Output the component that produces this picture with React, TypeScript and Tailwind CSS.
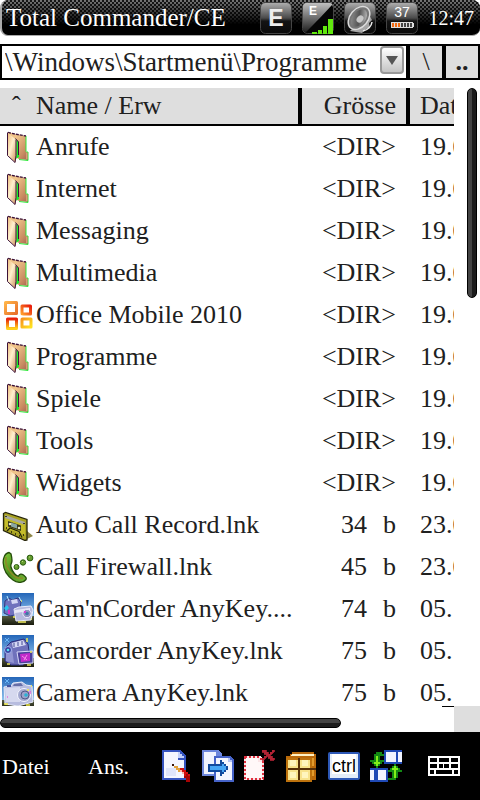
import type { ReactNode } from "react"

type IconName = "folder" | "office" | "cassette" | "phone" | "camBoth" | "camcorder" | "camera"

interface Entry {
  name: string
  icon: IconName
  size: string
  unit?: string
  date: string
}

const ENTRIES: Entry[] = [
  { name: "Anrufe", icon: "folder", size: "<DIR>", date: "19.0" },
  { name: "Internet", icon: "folder", size: "<DIR>", date: "19.0" },
  { name: "Messaging", icon: "folder", size: "<DIR>", date: "19.0" },
  { name: "Multimedia", icon: "folder", size: "<DIR>", date: "19.0" },
  { name: "Office Mobile 2010", icon: "office", size: "<DIR>", date: "19.0" },
  { name: "Programme", icon: "folder", size: "<DIR>", date: "19.0" },
  { name: "Spiele", icon: "folder", size: "<DIR>", date: "19.0" },
  { name: "Tools", icon: "folder", size: "<DIR>", date: "19.0" },
  { name: "Widgets", icon: "folder", size: "<DIR>", date: "19.0" },
  { name: "Auto Call Record.lnk", icon: "cassette", size: "34", unit: "b", date: "23.0" },
  { name: "Call Firewall.lnk", icon: "phone", size: "45", unit: "b", date: "23.0" },
  { name: "Cam'nCorder AnyKey....", icon: "camBoth", size: "74", unit: "b", date: "05." },
  { name: "Camcorder AnyKey.lnk", icon: "camcorder", size: "75", unit: "b", date: "05." },
  { name: "Camera AnyKey.lnk", icon: "camera", size: "75", unit: "b", date: "05." },
]

const Svg32 = ({ children }: { children: ReactNode }) => (
  <svg viewBox="0 0 32 32" className="size-8 shrink-0" aria-hidden="true">
    {children}
  </svg>
)

// Toolbar icons live on a 16px grid, drawn double size
const Svg16 = ({ children }: { children: ReactNode }) => (
  <svg viewBox="0 0 16 16" className="size-8 shrink-0" shapeRendering="crispEdges" aria-hidden="true">
    {children}
  </svg>
)

/* ---------- file icons ---------- */

const FolderIcon = () => (
  <Svg32>
    <path d="M6 1 13 3l11 2v16h2v8l-9-1-4-2z" fill="url(#folderBack)" />
    <path d="M24 5v15.500M17 28.500l9 1V21h-2" fill="none" stroke="#2fe83a" strokeWidth="1" />
    <path d="M6 1.500 13 3l11 2" fill="none" stroke="#3c1238" strokeWidth="1.400" strokeDasharray="3 1" />
    <path d="M13.500 8 17 11v15l-3.500 2z" fill="#19f02c" />
    <path d="M13.500 7.500 16.500 11v13" fill="none" stroke="#3c1238" strokeWidth="1" />
    <path d="M5.500 1.500 14.500 9v15l-1 7.500-8-7z" fill="url(#folderFront)" />
    <path d="M5.500 1.500v23M14 8.500v16l-1 7-7.500-7" fill="none" stroke="#3c1238" strokeWidth="1" />
    <path d="M24 21.500h1.500V28H24z" fill="#d79e78" />
  </Svg32>
)

const OfficeIcon = () => (
  <Svg32>
    <g fill="none" strokeWidth="3" strokeLinejoin="round">
      <rect x="3.500" y="3.500" width="11" height="11" stroke="url(#officeA)" />
      <rect x="20" y="7" width="8.500" height="8" stroke="url(#officeB)" />
      <rect x="5.500" y="20" width="9" height="9.500" stroke="url(#officeC)" />
      <rect x="20" y="20" width="9" height="8" stroke="url(#officeD)" />
    </g>
    <path d="M17.500 11.500 18.500 16l4.500 1.500-4.500 1-1 4.500-1-4.500-4.500-1 4.500-1.500z" fill="#fff" />
  </Svg32>
)

const CassetteIcon = () => (
  <Svg32>
    <path d="m25 22 6 5-6 3z" fill="#8f8748" />
    <path d="m1.500 4.500 2-1L25 10.500V31l-2 .5L1.500 21.500z" fill="#a9a322" stroke="#26240a" strokeWidth="1.300" />
    <path d="m3 6 20 7v3L3 9.500z" fill="#a8a9a0" />
    <path d="m3 9 20 7v10L3 19z" fill="#c5bd2b" />
    <path d="m6 12 13 4.500V22L6 17.500z" fill="#34351b" />
    <path d="m9 13.500 6 2v4l-6-2z" fill="#8aa6a4" />
    <circle cx="8" cy="15" r="1.300" fill="#e8e8c2" />
    <circle cx="17" cy="19" r="1.300" fill="#e8e8c2" />
    <path d="m5 22 3-3 9 3.500 3 6" fill="none" stroke="#222409" strokeWidth="1.200" />
    <path d="M9 23h1M13 25h1M17 27h1M4 19h1M21 26h1M4 7v1M22 14v1" stroke="#1b1b0a" strokeWidth="1.500" />
  </Svg32>
)

const PhoneIcon = () => (
  <Svg32>
    <path
      d="M7 1.500C3 2 1 7 1.200 12c.3 7 4.300 13 9.800 17 4 3 10 3.500 13-.5.8-1.500-.5-3-2.500-4.500s-4-1.300-5 1c-2 .5-6-3.500-7.500-9C8.500 14 9 13 9.500 12c1-2 .5-5-.5-9z"
      fill="url(#phoneGreen)"
      stroke="#254d0b"
      strokeWidth="1.300"
    />
    <path d="M4 6c-1 6 1 12 6 17 3 3 7 5 11 4" fill="none" stroke="#8d8a28" strokeWidth="1.600" />
    <g stroke="#2b5c13" strokeWidth="1" fill="#669d2f">
      <circle cx="14.500" cy="16" r="2.500" />
      <circle cx="21" cy="11.500" r="2.700" />
      <circle cx="28" cy="7" r="2.900" />
    </g>
    <path d="M13.500 15h1M20 10.500h1M27 6h1" stroke="#b8e27e" />
  </Svg32>
)

const CamBackdrop = () => (
  <>
    <rect width="32" height="32" fill="url(#camSky)" />
    <path d="M0 23h32v9H0z" fill="url(#camGround)" />
  </>
)

const CamBothIcon = () => (
  <Svg32>
    <CamBackdrop />
    <path d="m3 8 4-3 3 2 6-2 3 4-2 12-9 2-6-3z" fill="#7072bd" stroke="#31387f" />
    <path d="m9 7 6-1 1 4-6 1z" fill="#d4d7f4" />
    <path d="m2 15 3-3 2 3-3 3z" fill="#28c6ee" />
    <path d="M5 3 7 8M17 4l2 4" stroke="#b8eaff" />
    <path d="m12 16 5-2 12-1 2 4-2 10-15 1z" fill="#b6badf" stroke="#e9ecfa" />
    <path d="m13 17 15-2v3l-15 2z" fill="#e8e8f8" />
    <circle cx="25" cy="20.500" r="4.200" fill="#9094c1" stroke="#eef" />
    <circle cx="25" cy="20.500" r="1.800" fill="#3e75a9" />
    <path d="M22 19h2M7 17v4" stroke="#ef25d5" strokeWidth="1.500" />
    <path d="M19 8h1M11 24h2M29 26h1M16 29h8" stroke="#efeb62" strokeWidth="1.500" />
  </Svg32>
)

const CamcorderIcon = () => (
  <Svg32>
    <CamBackdrop />
    <path d="m3 13 6-6 13-3 4 5 2 14-7 7H9l-6-4z" fill="#6f71bb" stroke="#282d7d" />
    <path d="m10 8 11-3 3 5-13 3z" fill="#d5d8f5" />
    <path d="M12 8v4M16 7v4M20 6v4" stroke="#454b92" />
    <path d="m4 14 6-1 2 15-8-2z" fill="#9295d2" />
    <circle cx="6" cy="15" r="3.500" fill="#3841a1" stroke="#a6b6ef" />
    <circle cx="6" cy="15" r="1.300" fill="#4de2ee" />
    <path d="m15 17 16-1v12l-14 1z" fill="#4b419b" stroke="#d9dcf8" />
    <path d="m18 19 10-1v8l-9 1z" fill="#c32bcb" />
    <path d="m20 21 5 4M25 20l-3 5" stroke="#f78be9" />
    <path d="M25 3v4M29 16v2M5 29h3M25 30h4" stroke="#eee85b" strokeWidth="1.500" />
    <path d="M3 3l4 4M7 3 3 7" stroke="#69b6f8" />
  </Svg32>
)

const CameraIcon = () => (
  <Svg32>
    <CamBackdrop />
    <path d="m2 10 7-1 2-3 9-1 4 3 6 1 1 16-15 4-13-2z" fill="#b7bcdf" stroke="#e9edfb" />
    <path d="m3 11 15-1v15H4z" fill="#d6d9ef" />
    <path d="m12 7 7-1 2 3H11z" fill="#666ea7" />
    <path d="M5 9h4" stroke="#4253a0" strokeWidth="2" />
    <circle cx="22" cy="18" r="6.500" fill="#a3a8cf" stroke="#f4f5ff" />
    <circle cx="23" cy="18" r="4" fill="#9ca3cb" stroke="#525988" />
    <circle cx="24" cy="18" r="1.800" fill="#2bb2d4" />
    <path d="M25 13h2M2 27h4M24 28h4M29 9h1" stroke="#f0e948" strokeWidth="1.500" />
    <path d="M28 14v3M5 20h1" stroke="#ec35d4" />
    <path d="M3 2l4 4M7 2 3 6" stroke="#69b6f8" />
  </Svg32>
)

const ICONS: Record<IconName, () => ReactNode> = {
  folder: FolderIcon,
  office: OfficeIcon,
  cassette: CassetteIcon,
  phone: PhoneIcon,
  camBoth: CamBothIcon,
  camcorder: CamcorderIcon,
  camera: CameraIcon,
}

// Shared gradients for the icons above
const IconDefs = () => (
  <svg className="absolute size-0" aria-hidden="true">
    <defs>
      <linearGradient id="folderBack" x1="0" y1="0" x2="1" y2="1">
        <stop offset=".3" stopColor="#efc389" />
        <stop offset=".75" stopColor="#c98d62" />
        <stop offset="1" stopColor="#a7624f" />
      </linearGradient>
      <linearGradient id="folderFront" x1="0" y1="0" x2="1" y2="1">
        <stop offset="0" stopColor="#eeb875" />
        <stop offset=".45" stopColor="#fff0cf" />
        <stop offset="1" stopColor="#c98a55" />
      </linearGradient>
      <linearGradient id="officeA" x1="0" y1="0" x2="1" y2="1">
        <stop offset="0" stopColor="#ffb347" />
        <stop offset="1" stopColor="#e8702c" />
      </linearGradient>
      <linearGradient id="officeB" x1="0" y1="1" x2="1" y2="0">
        <stop offset="0" stopColor="#ff9c2a" />
        <stop offset="1" stopColor="#e81e0c" />
      </linearGradient>
      <linearGradient id="officeC" x1="0" y1="0" x2="0" y2="1">
        <stop offset="0" stopColor="#e8200c" />
        <stop offset="1" stopColor="#ffd21a" />
      </linearGradient>
      <linearGradient id="officeD" x1="0" y1="0" x2="1" y2="1">
        <stop offset="0" stopColor="#f7941d" />
        <stop offset="1" stopColor="#ffe21f" />
      </linearGradient>
      <linearGradient id="phoneGreen" x1="0" y1="0" x2="1" y2="1">
        <stop offset="0" stopColor="#84d03d" />
        <stop offset=".5" stopColor="#4b8d1d" />
        <stop offset="1" stopColor="#76ba38" />
      </linearGradient>
      <linearGradient id="camSky" x1="0" y1="0" x2="0" y2="1">
        <stop offset="0" stopColor="#2466b8" />
        <stop offset=".7" stopColor="#8cc0ec" />
      </linearGradient>
      <linearGradient id="camGround" x1="0" y1="0" x2="0" y2="1">
        <stop offset="0" stopColor="#565c43" />
        <stop offset="1" stopColor="#191b0d" />
      </linearGradient>
      <linearGradient id="tile" x1="0" y1="0" x2="0" y2="1">
        <stop offset="0" stopColor="#b0b0b0" />
        <stop offset=".5" stopColor="#4a4a4a" />
        <stop offset=".6" stopColor="#141414" />
        <stop offset="1" stopColor="#0a0a0a" />
      </linearGradient>
      <linearGradient id="tileFade" x1="0" y1="0" x2="0" y2="1">
        <stop offset="0" stopColor="#c0c0c0" />
        <stop offset="1" stopColor="#202020" />
      </linearGradient>
      <linearGradient id="cone" x1="0" y1="0" x2="1" y2="1">
        <stop offset="0" stopColor="#9a9a9a" />
        <stop offset=".5" stopColor="#555" />
        <stop offset="1" stopColor="#d8d8d8" />
      </linearGradient>
    </defs>
  </svg>
)

/* ---------- status bar ---------- */

const Tile = ({ children }: { children: ReactNode }) => (
  <Svg32>
    <rect x=".5" y=".5" width="31" height="31" rx="5" fill="url(#tile)" stroke="#454545" />
    {children}
  </Svg32>
)

const StatusBar = () => (
  <header className="flex h-9 shrink-0 items-center gap-[10px] rounded-lg border-b border-l-2 border-[#aaa] bg-black bg-[image:linear-gradient(to_bottom,#0000,#000_70%),repeating-conic-gradient(#777_0_25%,#161616_0_50%)] bg-[length:100%_100%,4px_4px] pr-[6px] pl-1 text-white">
    <h1 className="min-w-0 flex-1 truncate text-[25px] leading-8">Total Commander/CE</h1>
    <Tile>
      <text x="16" y="24" textAnchor="middle" fontFamily="Liberation Sans" fontWeight="bold" fontSize="23" fill="#eee">
        E
      </text>
    </Tile>
    <Tile>
      <path d="M1 5q0-4 4-4h22q4 0 3 3L4 30q-3 0-3-3z" fill="url(#tileFade)" />
      <path d="M31 5v22q0 4-4 4H4L30 3z" fill="#050505" />
      <text x="7" y="13" fontFamily="Liberation Sans" fontWeight="bold" fontSize="12" fill="#fff">
        E
      </text>
      <path d="M10 30h5v2h-5zM16 28h4v4h-4zM21 24h4v8h-4zM26 17h5v15h-5z" fill="#61e80e" />
    </Tile>
    <Tile>
      <path d="m24 11 4 7-3 3 1 5-4 1-4 4-12-2z" fill="#a5a5a5" />
      <ellipse cx="15" cy="16" rx="13" ry="9" transform="rotate(-50 15 16)" fill="#777" stroke="#dcdcdc" strokeWidth="1.500" />
      <ellipse cx="15" cy="16" rx="10" ry="6.500" transform="rotate(-50 15 16)" fill="url(#cone)" />
      <ellipse cx="16" cy="17" rx="4" ry="3" transform="rotate(-50 16 17)" fill="#c8c8c8" />
      <path d="M19 29q8-2 9-9" stroke="#eee" strokeWidth="1.500" fill="none" />
    </Tile>
    <Tile>
      <text x="16" y="15" textAnchor="middle" fontFamily="Liberation Sans" fontSize="14" fill="#fff">
        37
      </text>
      <rect x="5" y="20" width="22" height="6" fill="#ddd" />
      <path d="M6 21h2v4H6zM9 21h2v4H9zM12 21h2v4h-2z" fill="#f26a11" />
      <path d="M15 21h2v4h-2zM18 21h2v4h-2zM21 21h2v4h-2zM24 21h2v4h-2z" fill="#444" />
      <path d="M27 21h1v4h-1z" fill="#ddd" />
    </Tile>
    <time className="w-[46px] text-right text-[20px] leading-8">12:47</time>
  </header>
)

/* ---------- path bar ---------- */

const PathBar = () => (
  <div className="flex h-9 shrink-0 gap-1 border-2 border-black bg-black">
    <div className="relative min-w-0 flex-1 bg-white">
      <select
        aria-label="Pfad"
        className="h-8 w-full appearance-none truncate rounded-none bg-white pr-7 pl-[3px] text-[27px] leading-8 text-[#202020] outline-none"
      >
        <option>\Windows\Startmenü\Programme</option>
      </select>
      <span className="pointer-events-none absolute top-0 right-[2px] flex h-7 w-6 items-center justify-center rounded-sm border-2 border-[#999] bg-linear-to-b from-white to-[#c4c4c4]">
        <svg viewBox="0 0 12 9" className="h-[9px] w-3" aria-hidden="true">
          <path d="M0 0h12L6 9z" fill="#555" />
        </svg>
      </span>
    </div>
    <button className="w-8 bg-[#dedede] text-[26px] leading-8 text-[#202020]">\</button>
    <button className="w-8 bg-[#dedede] text-[26px] leading-8 font-bold text-[#202020]">..</button>
  </div>
)

/* ---------- file list ---------- */

const FileTable = () => (
  <table className="w-full table-fixed border-separate border-spacing-0 text-[26px] text-[#202020]">
    <colgroup>
      <col />
      <col className="w-[108px]" />
      <col className="w-12" />
    </colgroup>
    <thead>
      <tr className="h-[38px] bg-[#dedede] text-left leading-9 whitespace-nowrap">
        <th className="border-b-2 border-black p-0 font-normal">
          <span className="inline-block w-9 pl-3">ˆ</span>
          Name / Erw
        </th>
        <th className="border-b-2 border-l-4 border-black p-0 pr-[10px] text-right font-normal">Grösse</th>
        <th className="overflow-hidden border-b-2 border-l-4 border-black p-0 pl-[10px] font-normal">Dat</th>
      </tr>
    </thead>
    <tbody>
      {ENTRIES.map((entry) => {
        const Icon = ICONS[entry.icon]
        return (
          <tr key={entry.name} className="h-[42px] leading-[42px] whitespace-nowrap">
            <td className="p-0">
              <div className="flex items-center gap-[2px] pl-[2px]">
                <Icon />
                <span>{entry.name}</span>
              </div>
            </td>
            <td className="p-0 pr-[10px]">
              <div className="flex justify-end gap-4">
                <span>{entry.size}</span>
                {entry.unit && <span>{entry.unit}</span>}
              </div>
            </td>
            <td className="overflow-hidden p-0 pl-[14px]">{entry.date}</td>
          </tr>
        )
      })}
    </tbody>
  </table>
)

/* ---------- bottom toolbar ---------- */

const EditIcon = () => (
  <Svg16>
    <g transform="translate(1 0)">
      <path d="M0 0h9l3 3v12H0z" fill="#3554c0" />
      <path d="M1 1h7v4h3v9H1z" fill="#f4f6ff" />
      <path d="M8 1h1v1h1v1h1v1H8z" fill="#c5d2fa" />
      <path d="M2 9h5v4H2z" fill="#dfe5fb" />
      <path d="M5 7h1v1h1v1H6V8H5z" fill="#3a1608" />
      <path d="M6 8h2v1h1v2H8v-1H7V9H6z" fill="#e3a23c" />
      <path d="M9 9h2v1h1v1h1v1h1v2h-2v-1h-1v-1h-1v-1H9z" fill="#d40f0f" />
      <path d="M12 12h1v1h1v3h-2v-2h-1v-1h1z" fill="#a80303" />
      <path d="M9 10h1v1h1v1h-1v-1H9z" fill="#ffb3a8" />
    </g>
  </Svg16>
)

const CopyIcon = () => (
  <Svg16>
    <path d="M0 0h8l2 2v11H0z" fill="#6d87dc" />
    <path d="M1 1h6v2h2v9H1z" fill="#f1f4ff" />
    <path d="M6 3h8l2 2v11H6z" fill="#4663c8" />
    <path d="M7 4h6v2h2v9H7z" fill="#f4f6ff" />
    <path d="M13 4h1v1h1v1h-2z" fill="#b4c3f5" />
    <path d="M3 7h6V5h1v1h1v1h1v1h1v2h-1v1h-1v1h-1v1H9v-2H3z" fill="#124a9d" />
    <path d="M4 8h6V7h1v1h1v2h-1v1h-1v-1H4z" fill="#45a5f5" />
  </Svg16>
)

const DeleteIcon = () => (
  <Svg16>
    <path d="M0 3h8l2 2v10H0z" fill="#fbe4e6" />
    <path d="M1 4h6v2h2v8H1z" fill="#fff8f8" />
    <path d="M.5 3.500h7l2 2v9h-9z" fill="none" stroke="#e0303f" strokeDasharray="1 1" />
    <path
      d="M9 0h2v1h1v1h1V1h1V0h1v1h-1v1h-1v1h1v1h1v1h-2V4h-1V3h-1v1h-1v1H9V4h1V3h1V2h-1V1H9z"
      fill="#b32334"
      stroke="#b32334"
      strokeWidth=".4"
    />
  </Svg16>
)

const PackIcon = () => (
  <Svg16>
    <path d="M3 1h11v1h1v13h-3V4H0V3h2V2h1z" fill="#b9690a" />
    <path d="M3 2h11v1H2z" fill="#fff2c4" />
    <path d="M13 4h1v4h-1zM13 9h1v4h-1z" fill="#e29b2c" />
    <path d="M0 4h13v12H0z" fill="#bd720d" />
    <path d="M1 5h5v4H1zM7 5h5v4H7zM1 10h5v5H1zM7 10h5v5H7z" fill="#f8e38c" />
    <path d="M2 5h3v3H2zM8 5h3v3H8zM2 11h3v3H2zM8 11h3v3H8z" fill="#fff5bd" />
    <path d="M6 4h1v11H6zM1 9h14v1H1z" fill="#573008" />
  </Svg16>
)

const CtrlIcon = () => (
  <svg viewBox="0 0 32 32" className="size-8 shrink-0" aria-hidden="true">
    <rect x="0" y="2" width="32" height="28" rx="2" fill="#2d58b6" />
    <rect x="2" y="4" width="28" height="24" fill="#e4edf9" />
    <rect x="4" y="4" width="24" height="20" fill="#fff" />
    <text x="16" y="22" textAnchor="middle" fontFamily="Liberation Sans" fontSize="18" fill="#000">
      ctrl
    </text>
  </svg>
)

const SwapIcon = () => (
  <Svg16>
    <path d="M7 0h9v7H7z" fill="#1f49b5" />
    <path d="M8 1h5v5H8zM14 1h2v5h-2z" fill="#f1f4ff" />
    <path d="M0 9h9v7H0z" fill="#1f49b5" />
    <path d="M0 10h2v5H0zM4 10h4v5H4z" fill="#f1f4ff" />
    <path d="M3 1h3v1h1v1H5v2h2v1H6v1H5v1H4v1H3V8H2V7H1V6H0V5h2V2h1z" fill="#138a14" />
    <path d="M3 3h1v3h1v1H4v1H3V7H2V6h1z" fill="#82f019" />
    <path d="M12 7h1v1h1v1h1v1h1v1h-2v3h-1v1H9v-1h2v-3H9v-1h1V9h1V8h1z" fill="#138a14" />
    <path d="M12 8h1v1h1v1h-1v4h-1v-4h-1V9h1z" fill="#82f019" />
  </Svg16>
)

const KeyboardIcon = () => (
  <svg viewBox="0 0 32 20" className="h-5 w-8 shrink-0" shapeRendering="crispEdges" aria-hidden="true">
    <path d="M0 0h32v20H0z" fill="#fff" />
    <path
      d="M2 2h7v4H2zM11 2h10v4H11zM23 2h7v4h-7zM2 8h7v4H2zM11 8h4v4h-4zM16 8h5v4h-5zM23 8h7v4h-7zM2 14h4v4H2zM8 14h16v4H8zM26 14h4v4h-4z"
      fill="#000"
    />
  </svg>
)

const TOOLS = [
  { label: "Bearbeiten", Icon: EditIcon },
  { label: "Kopieren", Icon: CopyIcon },
  { label: "Löschen", Icon: DeleteIcon },
  { label: "Packen", Icon: PackIcon },
  { label: "Strg", Icon: CtrlIcon },
  { label: "Tauschen", Icon: SwapIcon },
]

const Toolbar = () => (
  <footer className="flex h-[68px] shrink-0 items-center bg-black pr-5 pl-[2px] text-[22px] text-white">
    <button className="w-[86px] text-left">Datei</button>
    <button className="w-[72px] text-left">Ans.</button>
    <div className="flex gap-[10px]">
      {TOOLS.map(({ label, Icon }) => (
        <button key={label} aria-label={label}>
          <Icon />
        </button>
      ))}
    </div>
    <button aria-label="Tastatur" className="ml-auto">
      <KeyboardIcon />
    </button>
  </footer>
)

export default function App() {
  return (
    <div className="flex h-dvh flex-col overflow-hidden bg-white font-['Liberation_Serif',serif]">
      <IconDefs />
      <StatusBar />
      <main className="flex min-h-0 flex-1 flex-col pt-2">
        <PathBar />
        <div className="mt-2 flex min-h-0 flex-1">
          <div className="min-w-0 flex-1 overflow-hidden">
            <FileTable />
          </div>
          <div className="flex w-[26px] justify-end pr-[3px]">
            <div className="h-[34%] w-[10px] rounded-full border border-black bg-linear-to-r from-[#444] from-50% to-[#1c1c1c] to-50%" />
          </div>
        </div>
        <div className="flex h-[26px] shrink-0">
          <div className="flex min-w-0 flex-1 items-center pt-[8px]">
            <div className="h-[10px] w-3/4 rounded-full border border-black bg-linear-to-b from-[#444] from-50% to-[#1c1c1c] to-50%" />
            <div className="mb-auto ml-auto -mt-2 h-px w-3 bg-black" />
          </div>
          <div className="w-[26px] bg-[#dedede]" />
        </div>
      </main>
      <Toolbar />
    </div>
  )
}
